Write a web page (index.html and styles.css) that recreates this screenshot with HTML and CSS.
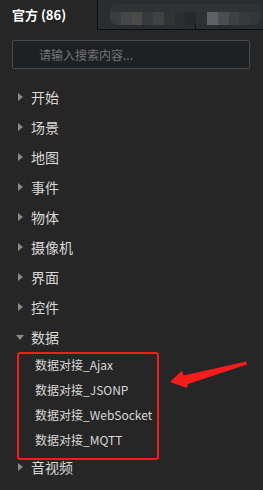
FILE: index.html
```html
<!DOCTYPE html>
<html lang="zh">
<head>
<meta charset="utf-8">
<title>资源面板</title>
<link rel="stylesheet" href="styles.css">
</head>
<body>
<div class="panel">
  <div class="tabs">
    <div class="tab-active">官方 (86)</div>
    <div class="tab-rest">
      <div class="blur">
        <div class="blur-top"></div>
        <div class="blur-row">
          <i style="background:#3a3e41"></i><i style="background:#43474a"></i><i style="background:#4a4a47"></i><i style="background:#363a3c"></i><i style="background:#3e4245"></i><i style="background:#323431"></i><i style="background:#2b2e30"></i><i style="background:#26292b"></i><i style="background:#2d3134"></i><i style="background:#5f6166"></i><i style="background:#4b4e51"></i><i style="background:#3e4144"></i><i style="background:#373a3d"></i><i style="background:#33373a"></i>
        </div>
      </div>
      <span class="tick"></span>
    </div>
  </div>
  <div class="search-wrap">
    <input class="search" type="text" placeholder="请输入搜索内容...">
  </div>
  <ul class="tree">
    <li class="node"><span class="caret"></span>开始</li>
    <li class="node"><span class="caret"></span>场景</li>
    <li class="node"><span class="caret"></span>地图</li>
    <li class="node"><span class="caret"></span>事件</li>
    <li class="node"><span class="caret"></span>物体</li>
    <li class="node"><span class="caret"></span>摄像机</li>
    <li class="node"><span class="caret"></span>界面</li>
    <li class="node"><span class="caret"></span>控件</li>
    <li class="node"><span class="caret open"></span>数据</li>
    <li class="children">
      <div class="child">数据对接_Ajax</div>
      <div class="child">数据对接_JSONP</div>
      <div class="child">数据对接_WebSocket</div>
      <div class="child">数据对接_MQTT</div>
    </li>
    <li class="node"><span class="caret"></span>音视频</li>
  </ul>
  <svg class="annot-arrow" width="263" height="490" viewBox="0 0 263 490">
    <polygon points="170,382 182,370.5 183.5,375.5 246,361.5 247,364.5 188,384 187,388" fill="#f51c1c"/>
  </svg>
</div>
</body>
</html>
```
FILE: styles.css
```css
* { box-sizing: border-box; }
html, body {
  margin: 0;
  padding: 0;
  background: #262626;
}
body {
  font-family: "Noto Sans CJK SC", "Noto Sans", sans-serif;
  color: #d6d6d6;
  width: 263px;
  height: 490px;
  overflow: hidden;
}
.panel {
  position: relative;
  width: 263px;
  height: 490px;
}
.tabs {
  display: flex;
  height: 30px;
}
.tab-active {
  width: 97px;
  padding-left: 12px;
  font-size: 13px;
  font-weight: bold;
  line-height: 30px;
  color: #ffffff;
}
.tab-rest {
  position: relative;
  flex: 1;
  background: #2a2d30;
  border-left: 1px solid #0e0e0e;
  border-bottom: 1px solid #0e0e0e;
  padding: 4px 2px 0 12px;
}
.blur {
  height: 21px;
  border-radius: 8px;
  overflow: hidden;
  background: #2f3336;
  display: flex;
  flex-direction: column;
}
.blur-top {
  height: 8px;
  background: #2f3336;
}
.blur-row {
  flex: 1;
  display: flex;
}
.blur-row i {
  flex: 1;
}
.tick {
  position: absolute;
  left: 97px;
  bottom: 0;
  width: 1px;
  height: 4px;
  background: #0e0e0e;
}
.search-wrap {
  padding: 10px 13px 0 12px;
}
.search {
  display: block;
  width: 238px;
  height: 29px;
  border: 1px solid #4a4a4a;
  border-radius: 2px;
  background: #1e2123;
  padding: 0 0 0 26px;
  font-family: "Noto Sans CJK SC", "Noto Sans", sans-serif;
  font-size: 12px;
  color: #cccccc;
  outline: none;
}
.search::placeholder {
  color: #747474;
}
.tree {
  list-style: none;
  margin: 13px 0 0 0;
  padding: 0;
}
.node {
  display: flex;
  align-items: center;
  height: 30px;
  padding-left: 17px;
  font-size: 14px;
  color: #d8d8d8;
}
.caret {
  width: 0;
  height: 0;
  border-top: 4px solid transparent;
  border-bottom: 4px solid transparent;
  border-left: 5px solid #8a8a8a;
  margin-right: 8px;
  margin-left: 1px;
}
.caret.open {
  border-left: 4px solid transparent;
  border-right: 4px solid transparent;
  border-top: 5px solid #8a8a8a;
  border-bottom: 0;
  margin-left: -1px;
  margin-right: 7px;
}
.children {
  position: relative;
  padding: 0;
}
.children::after {
  content: "";
  position: absolute;
  left: 17px;
  top: 0;
  width: 138px;
  height: 104px;
  border: 2px solid #f51c1c;
  border-radius: 3px;
  pointer-events: none;
}
.child {
  height: 25px;
  line-height: 25px;
  padding-left: 35px;
  font-size: 12px;
  color: #d8d8d8;
}
.annot-arrow {
  position: absolute;
  left: 0;
  top: 0;
  pointer-events: none;
}
```
